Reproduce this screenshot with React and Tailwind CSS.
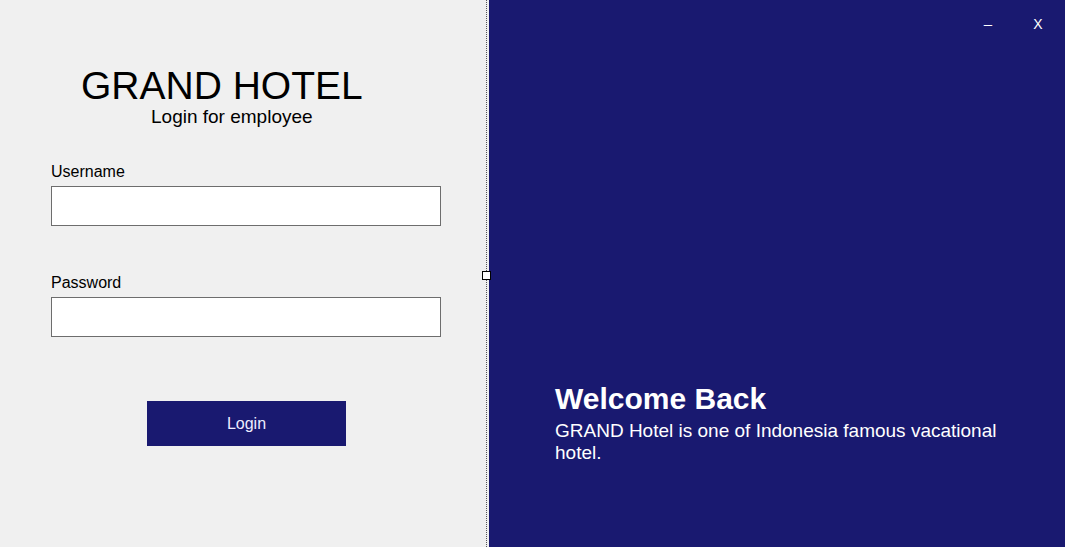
import React, { useState } from 'react';

const inputClass = "block w-[390px] h-[40px] bg-white border border-[#6d6d6d] px-2 text-[16px] focus:outline-none";
const labelClass = "block text-[16px] leading-none text-black";

function LoginPanel() {
    const [username, setUsername] = useState('');
    const [password, setPassword] = useState('');

    return (
        <div className="w-[486px] h-full bg-[#f0f0f0] pt-[66px]">
            <h1 className="ml-[81px] text-[39px] leading-none text-black">GRAND HOTEL</h1>
            <p className="ml-[151px] mt-[2px] text-[19px] leading-none text-black">Login for employee</p>

            <form className="ml-[51px] mt-[38px]" onSubmit={(e) => e.preventDefault()}>
                <label htmlFor="username" className={labelClass}>Username</label>
                <input
                    id="username"
                    type="text"
                    value={username}
                    onChange={(e) => setUsername(e.target.value)}
                    className={`${inputClass} mt-[6px]`}
                />

                <label htmlFor="password" className={`${labelClass} mt-[49px]`}>Password</label>
                <input
                    id="password"
                    type="password"
                    value={password}
                    onChange={(e) => setPassword(e.target.value)}
                    className={`${inputClass} mt-[6px]`}
                />

                <button
                    type="submit"
                    className="ml-[96px] mt-[64px] w-[199px] h-[45px] bg-[#191970] text-[#eeeeff] text-[16px] cursor-pointer"
                >
                    Login
                </button>
            </form>
        </div>
    );
}

function Divider() {
    return (
        <div className="relative w-[3px] h-full bg-[#f0f0f0] border-l border-dotted border-[#555555]">
            <div className="absolute left-[-5px] top-[271px] w-[9px] h-[9px] bg-white border border-black"></div>
        </div>
    );
}

function WelcomePanel() {
    return (
        <div className="flex-1 h-full bg-[#191970] text-white flex flex-col">
            <div className="flex justify-end items-center gap-[18px] pr-[11px] pt-[17px] h-[31px]">
                <button className="w-[32px] text-center text-[15px] leading-[14px] text-white">–</button>
                <button className="w-[32px] text-center text-[14px] leading-[14px] text-white">X</button>
            </div>
            <div className="pl-[66px] mt-[353px]">
                <h2 className="text-[30px] leading-none font-bold">Welcome Back</h2>
                <p className="mt-[6px] w-[450px] text-[19px] leading-[22px]">
                    GRAND Hotel is one of Indonesia famous vacational hotel.
                </p>
            </div>
        </div>
    );
}

export default function App() {
    return (
        <div className="flex w-full h-screen overflow-hidden" style={{ fontFamily: '"Liberation Sans", Arial, sans-serif' }}>
            <LoginPanel />
            <Divider />
            <WelcomePanel />
        </div>
    );
}
